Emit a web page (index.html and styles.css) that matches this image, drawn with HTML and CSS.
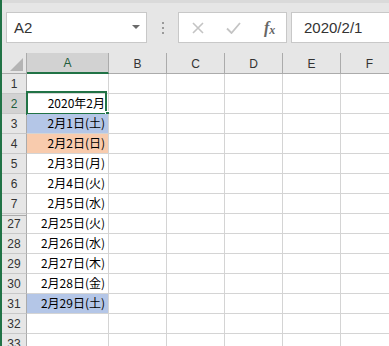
FILE: index.html
```html
<!DOCTYPE html>
<html lang="ja">

<head>
    <meta charset="UTF-8">
    <meta name="viewport" content="width=device-width, initial-scale=1.0">
    <title>Excel</title>

    <link rel="stylesheet" href="styles.css">
</head>

<body>
    <div class="toolbar">
        <div class="namebox">
            <span>A2</span>
            <span class="arrow"></span>
        </div>
        <div class="grip">
            <span></span><span></span><span></span>
        </div>
        <div class="fbtns">
            <svg width="12" height="12" viewBox="0 0 12 12">
                <path d="M1 1 L11 11 M11 1 L1 11" stroke="#c4c4c4" stroke-width="1.6" fill="none" />
            </svg>
            <svg width="15" height="12" viewBox="0 0 15 12">
                <path d="M1 6.5 L5.5 11 L14 1" stroke="#c4c4c4" stroke-width="1.8" fill="none" />
            </svg>
            <span class="fx">f<span class="x">x</span></span>
        </div>
        <div class="formula">2020/2/1</div>
    </div>

    <div class="sheet">
        <div class="hd corner"><span class="tri"></span></div>
        <div class="hd col sel">A</div>
        <div class="hd col">B</div>
        <div class="hd col">C</div>
        <div class="hd col">D</div>
        <div class="hd col">E</div>
        <div class="hd col">F</div>

        <div class="hd row">1</div>
        <div class="cell"></div><div class="cell"></div><div class="cell"></div><div class="cell"></div><div class="cell"></div><div class="cell"></div>

        <div class="hd row sel">2</div>
        <div class="cell active">2020年2月<span class="frame"></span><span class="handle"></span></div>
        <div class="cell"></div><div class="cell"></div><div class="cell"></div><div class="cell"></div><div class="cell"></div>

        <div class="hd row">3</div>
        <div class="cell blue">2月1日(土)</div>
        <div class="cell"></div><div class="cell"></div><div class="cell"></div><div class="cell"></div><div class="cell"></div>

        <div class="hd row">4</div>
        <div class="cell orange">2月2日(日)</div>
        <div class="cell"></div><div class="cell"></div><div class="cell"></div><div class="cell"></div><div class="cell"></div>

        <div class="hd row">5</div>
        <div class="cell">2月3日(月)</div>
        <div class="cell"></div><div class="cell"></div><div class="cell"></div><div class="cell"></div><div class="cell"></div>

        <div class="hd row">6</div>
        <div class="cell">2月4日(火)</div>
        <div class="cell"></div><div class="cell"></div><div class="cell"></div><div class="cell"></div><div class="cell"></div>

        <div class="hd row">7</div>
        <div class="cell">2月5日(水)</div>
        <div class="cell"></div><div class="cell"></div><div class="cell"></div><div class="cell"></div><div class="cell"></div>

        <div class="hd row hidden-above">27</div>
        <div class="cell">2月25日(火)</div>
        <div class="cell"></div><div class="cell"></div><div class="cell"></div><div class="cell"></div><div class="cell"></div>

        <div class="hd row">28</div>
        <div class="cell">2月26日(水)</div>
        <div class="cell"></div><div class="cell"></div><div class="cell"></div><div class="cell"></div><div class="cell"></div>

        <div class="hd row">29</div>
        <div class="cell">2月27日(木)</div>
        <div class="cell"></div><div class="cell"></div><div class="cell"></div><div class="cell"></div><div class="cell"></div>

        <div class="hd row">30</div>
        <div class="cell">2月28日(金)</div>
        <div class="cell"></div><div class="cell"></div><div class="cell"></div><div class="cell"></div><div class="cell"></div>

        <div class="hd row">31</div>
        <div class="cell blue">2月29日(土)</div>
        <div class="cell"></div><div class="cell"></div><div class="cell"></div><div class="cell"></div><div class="cell"></div>

        <div class="hd row">32</div>
        <div class="cell"></div><div class="cell"></div><div class="cell"></div><div class="cell"></div><div class="cell"></div><div class="cell"></div>

        <div class="hd row">33</div>
        <div class="cell"></div><div class="cell"></div><div class="cell"></div><div class="cell"></div><div class="cell"></div><div class="cell"></div>
    </div>
</body>

</html>
```

FILE: styles.css
```css
* {
    margin: 0;
    padding: 0;
    box-sizing: border-box;
}

body {
    width: 389px;
    height: 346px;
    overflow: hidden;
    background-color: #e6e6e6;
    border-left: 2px solid #217346;
    font-family: "Liberation Sans", Arial, sans-serif;
}

/* formula bar */
.toolbar {
    height: 53px;
    display: flex;
    align-items: flex-start;
    padding: 9px 0 0 4px;
    border-top: 3px solid #dadada;
}

.namebox {
    width: 141px;
    height: 31px;
    background-color: white;
    border: 1px solid #c8c8c8;
    display: flex;
    align-items: center;
    justify-content: space-between;
    padding: 0 6px 0 7px;
    font-size: 15px;
    color: #333;
}

.arrow {
    width: 0;
    height: 0;
    border-left: 4px solid transparent;
    border-right: 4px solid transparent;
    border-top: 4px solid #6a6a6a;
    margin-bottom: 2px;
}

.grip {
    width: 31px;
    height: 31px;
    display: flex;
    flex-direction: column;
    align-items: center;
    justify-content: center;
    gap: 3px;
}

.grip span {
    width: 2px;
    height: 2px;
    background-color: #9a9a9a;
}

.fbtns {
    width: 109px;
    height: 31px;
    background-color: white;
    border: 1px solid #c8c8c8;
    display: flex;
    align-items: center;
    padding-left: 13px;
    gap: 22px;
}

.fx {
    font-family: "Liberation Serif", serif;
    font-style: italic;
    font-weight: bold;
    font-size: 16px;
    color: #666;
    margin-left: 1px;
}

.fx .x {
    font-size: 12px;
    position: relative;
    top: 1px;
}

.formula {
    flex: 1;
    margin-left: 4px;
    height: 31px;
    background-color: white;
    border: 1px solid #c8c8c8;
    border-right: none;
    display: flex;
    align-items: center;
    padding-left: 12px;
    font-size: 15px;
    color: #333;
}

/* grid */
.sheet {
    display: grid;
    grid-template-columns: 25px 82px 58px 58px 58px 58px 58px;
    grid-template-rows: 21px repeat(14, 20px);
}

.hd {
    display: flex;
    align-items: center;
    justify-content: center;
    font-size: 12px;
    color: #333;
    background-color: #e6e6e6;
}

.corner {
    position: relative;
    border-right: 1px solid #ababab;
    border-bottom: 1px solid #ababab;
}

.tri {
    position: absolute;
    right: 3px;
    bottom: 2px;
    width: 0;
    height: 0;
    border-left: 13px solid transparent;
    border-bottom: 13px solid #b4b4b4;
}

.col {
    border-right: 1px solid #ababab;
    border-bottom: 1px solid #ababab;
    padding-top: 1px;
}

.col.sel {
    background-color: #d2d2d2;
    border-bottom: 2px solid #217346;
    color: #1f5c3b;
}

.row {
    border-right: 1px solid #ababab;
    border-bottom: 1px solid #c8c8c8;
    padding-top: 1px;
}

.row.sel {
    background-color: #d2d2d2;
    color: #1f5c3b;
}

.hidden-above {
    box-shadow: inset 0 1px 0 #e6e6e6, inset 0 2px 0 #ababab;
}

.cell {
    position: relative;
    background-color: white;
    border-right: 1px solid #d4d4d4;
    border-bottom: 1px solid #d4d4d4;
    font-family: "Noto Sans CJK JP", sans-serif;
    font-size: 12px;
    color: #000;
    text-align: right;
    padding-right: 3px;
    line-height: 17px;
}

.cell.blue {
    background-color: #b4c6e7;
}

.cell.orange {
    background-color: #f8cbad;
}

.frame {
    position: absolute;
    left: -1px;
    top: -3px;
    width: 81px;
    height: 24px;
    border: 2px solid #217346;
}

.handle {
    position: absolute;
    left: 78px;
    top: 17px;
    width: 6px;
    height: 6px;
    background-color: #217346;
    border: 1px solid white;
}
```
